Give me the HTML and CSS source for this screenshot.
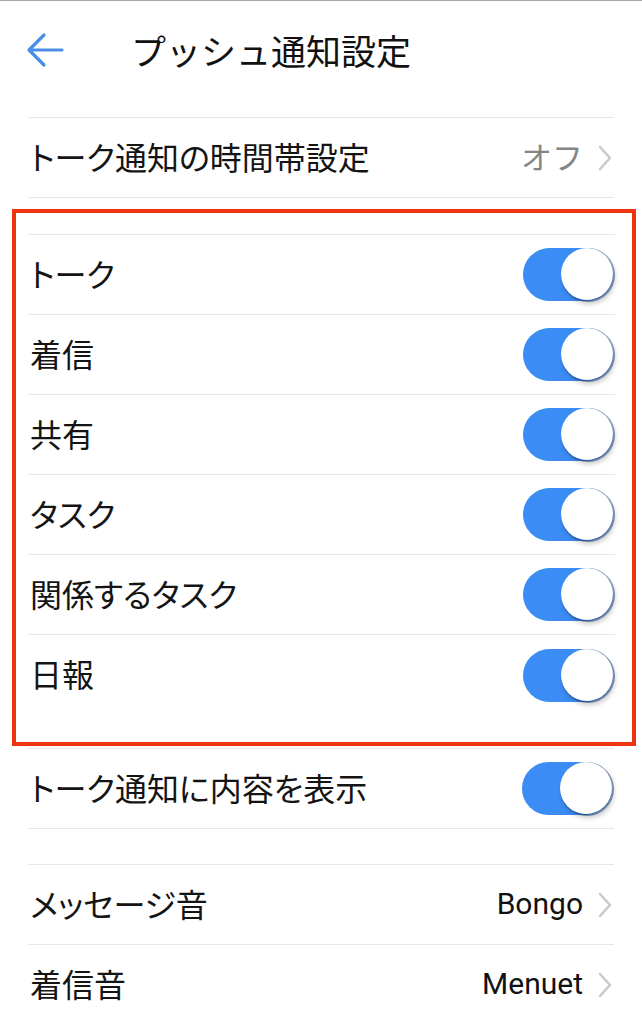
FILE: index.html
```html
<!DOCTYPE html>
<html lang="ja">
<head>
    <meta charset="UTF-8">
    <meta name="viewport" content="width=device-width, initial-scale=1.0">
    <title>プッシュ通知設定</title>
    <link rel="stylesheet" href="styles.css">
</head>
<body>
    <!--top bar with back arrow and title-->
    <div class="header">
        <svg class="back" width="38" height="36" viewBox="0 0 38 36">
            <path d="M36 18 H3 M18 3 L3 18 L18 33" fill="none" stroke="#4a8fe6" stroke-width="3.2" stroke-linecap="round" stroke-linejoin="round"/>
        </svg>
        <h1 class="title">プッシュ通知設定</h1>
    </div>

    <!--quiet hours-->
    <div class="list">
        <div class="row">
            <span class="label">トーク通知の時間帯設定</span>
            <span class="value gray">オフ</span>
            <svg class="chevron" width="16" height="28" viewBox="0 0 16 28"><polyline points="3,3 13,14 3,25" fill="none" stroke="#cacaca" stroke-width="2.6" stroke-linecap="round" stroke-linejoin="round"/></svg>
        </div>
    </div>

    <!--highlighted group of switches-->
    <div class="highlight">
        <div class="list">
            <div class="row"><span class="label">トーク</span><span class="switch"><span class="knob"></span></span></div>
            <div class="row"><span class="label">着信</span><span class="switch"><span class="knob"></span></span></div>
            <div class="row"><span class="label">共有</span><span class="switch"><span class="knob"></span></span></div>
            <div class="row"><span class="label">タスク</span><span class="switch"><span class="knob"></span></span></div>
            <div class="row"><span class="label">関係するタスク</span><span class="switch"><span class="knob"></span></span></div>
            <div class="row last"><span class="label">日報</span><span class="switch"><span class="knob"></span></span></div>
        </div>
    </div>

    <div class="list">
        <div class="row"><span class="label">トーク通知に内容を表示</span><span class="switch"><span class="knob"></span></span></div>
    </div>

    <!--sounds-->
    <div class="list spaced">
        <div class="row">
            <span class="label">メッセージ音</span>
            <span class="value latin">Bongo</span>
            <svg class="chevron" width="16" height="28" viewBox="0 0 16 28"><polyline points="3,3 13,14 3,25" fill="none" stroke="#cacaca" stroke-width="2.6" stroke-linecap="round" stroke-linejoin="round"/></svg>
        </div>
        <div class="row">
            <span class="label">着信音</span>
            <span class="value latin">Menuet</span>
            <svg class="chevron" width="16" height="28" viewBox="0 0 16 28"><polyline points="3,3 13,14 3,25" fill="none" stroke="#cacaca" stroke-width="2.6" stroke-linecap="round" stroke-linejoin="round"/></svg>
        </div>
    </div>
</body>
</html>
```

FILE: styles.css
```css
/* page base */
body {
    margin: 0;
    background-color: #ffffff;
    border-top: 1px solid #a8a8a8;
    font-family: "Noto Sans CJK JP", "Noto Sans", sans-serif;
    color: #141414;
    overflow: hidden;
}

/* header bar */
.header {
    display: flex;
    align-items: center;
    height: 98px;
    padding: 0 26px;
    margin-bottom: 18px;
}

.back {
    flex-shrink: 0;
}

.title {
    margin: 0 0 0 67px;
    padding-bottom: 2px;
    font-size: 35px;
    font-weight: 400;
    line-height: 1;
    color: #111111;
}

/* lists and rows */
.list {
    margin: 0 28px;
    border-top: 1px solid #e7e7e7;
}

.row {
    display: flex;
    align-items: center;
    height: 79px;
    border-bottom: 1px solid #e7e7e7;
}

.row.last {
    border-bottom: none;
    height: 80px;
}

.label {
    flex: 1;
    font-size: 32px;
    line-height: 1;
    padding-bottom: 4px;
    padding-left: 2px;
    font-feature-settings: "palt";
}

.value {
    font-size: 31px;
    line-height: 1;
    padding-bottom: 4px;
    margin-right: 14px;
}

.value.gray {
    color: #858585;
}

.value.latin {
    font-family: Roboto, "Liberation Sans", sans-serif;
    font-size: 30px;
    padding-bottom: 2px;
    color: #111111;
}

.chevron {
    margin-right: 1px;
}

/* red annotation box around the switch group */
.highlight {
    margin: 11px 6px 2px 12px;
    border: 4px solid #ef3412;
    padding: 21px 0 27px 0;
}

.highlight .list {
    margin: 0 17px 0 12px;
}

.spaced {
    margin-top: 35px;
}

/* toggle switch */
.switch {
    position: relative;
    width: 90px;
    height: 53px;
    border-radius: 27px;
    background-color: #3b8cf4;
    margin-right: 2px;
}

.knob {
    position: absolute;
    right: 0;
    top: 0;
    width: 52px;
    height: 52px;
    border-radius: 50%;
    background-color: #ffffff;
    box-shadow: 1px 1px 0 1px rgba(30, 70, 130, 0.55), 2px 4px 5px rgba(0, 0, 0, 0.22);
}
```
